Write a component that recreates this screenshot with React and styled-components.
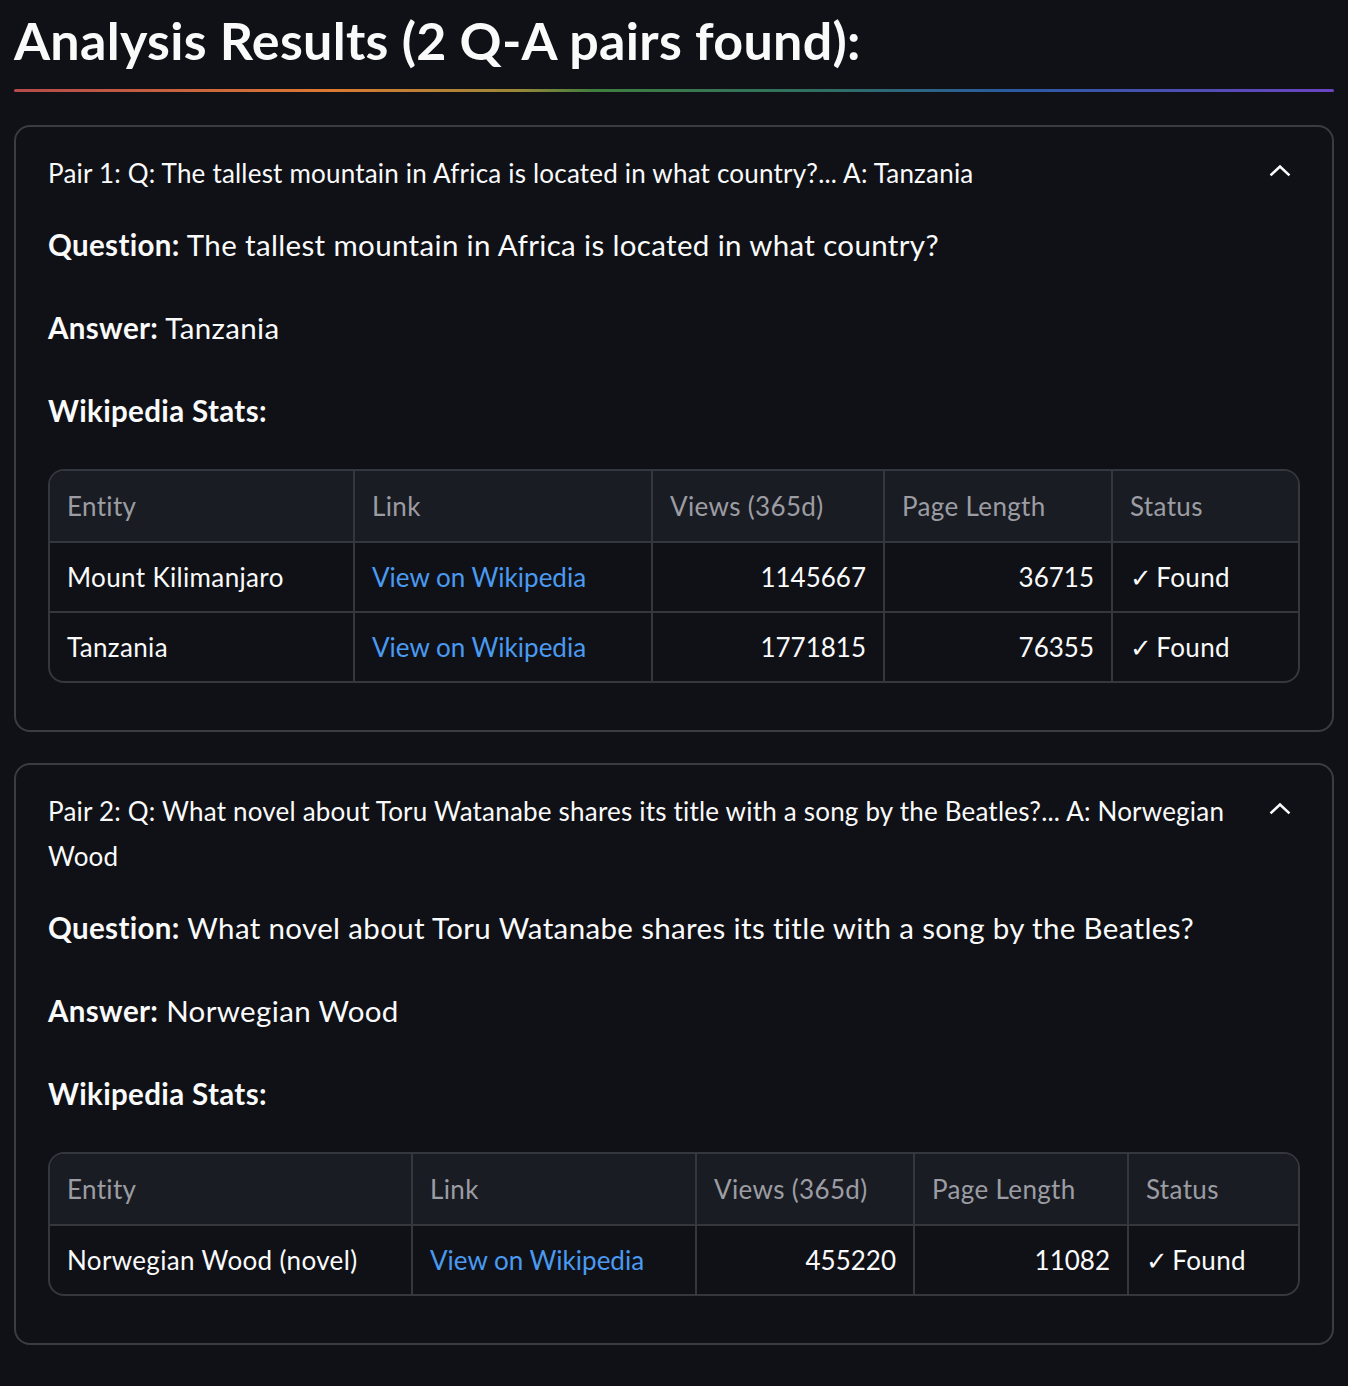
import React from "react";
import styled, { createGlobalStyle } from "styled-components";

const Global = createGlobalStyle`
  html, body { margin: 0; padding: 0; background: #0f1117; }
  body { font-family: "Lato", "Noto Sans", sans-serif; color: #fafafa; }
  * { box-sizing: border-box; }
`;

const Page = styled.div`
  padding: 8px 14px 40px 14px;
  width: 1348px;
`;

const Title = styled.h3`
  margin: 0;
  font-size: 52px;
  line-height: 64px;
  font-weight: 700;
  letter-spacing: 0.3px;
  color: #fafafa;
`;

const Divider = styled.div`
  margin-top: 17px;
  height: 3px;
  border-radius: 2px;
  background: linear-gradient(
    to right,
    #b54a4b 0%,
    #dc7a32 24%,
    #9c8838 38%,
    #3f7f3f 44%,
    #2f6f66 62%,
    #2b5aa3 76%,
    #6c44c2 100%
  );
`;

const Stack = styled.div`
  margin-top: 33px;
  display: flex;
  flex-direction: column;
  gap: 31px;
`;

const Expander = styled.div`
  border: 2px solid #3a3c42;
  border-radius: 16px;
  padding: 0 32px 47px 32px;
`;

const Summary = styled.div`
  display: flex;
  align-items: flex-start;
  justify-content: space-between;
  gap: 36px;
  padding-top: 24px;
  font-size: 26px;
  letter-spacing: 0.2px;
  line-height: 45px;
  color: #fafafa;
`;

const Chevron = styled.svg`
  flex: none;
  width: 24px;
  height: 24px;
  margin-top: 8px;
  margin-right: 8px;
`;

const Body = styled.div`
  padding-top: 26px;
`;

const Para = styled.p`
  margin: 0 0 ${(p) => (p.$last ? "0" : "38px")} 0;
  font-size: 29.5px;
  letter-spacing: 0.35px;
  line-height: 45px;
  color: #fafafa;
  b { font-weight: 700; }
`;

const Table = styled.div`
  margin-top: 36px;
  border: 2px solid #35373e;
  border-radius: 16px;
  overflow: hidden;
  display: grid;
  grid-template-columns: ${(p) => p.$cols};
`;

const Cell = styled.div`
  display: flex;
  align-items: center;
  justify-content: ${(p) => (p.$right ? "flex-end" : "flex-start")};
  height: ${(p) => (p.$head ? "72px" : p.$bottom ? "68px" : "70px")};
  padding: 0 17px;
  font-size: 26px;
  letter-spacing: ${(p) => (p.$right ? "0" : "0.35px")};
  color: ${(p) => (p.$head ? "#9c9da3" : "#fafafa")};
  background: ${(p) => (p.$head ? "#1a1c23" : "transparent")};
  border-right: ${(p) => (p.$last ? "none" : "2px solid #35373e")};
  border-bottom: ${(p) => (p.$bottom ? "none" : "2px solid #35373e")};
  white-space: nowrap;
`;

const Link = styled.a`
  color: #4a9af0;
  text-decoration: none;
  letter-spacing: 0;
`;

const Check = styled.span`
  margin-right: 4px;
`;

const heads = ["Entity", "Link", "Views (365d)", "Page Length", "Status"];

function StatsTable({ cols, rows }) {
  return (
    <Table $cols={cols}>
      {heads.map((h, i) => (
        <Cell key={h} $head $last={i === 4}>
          {h}
        </Cell>
      ))}
      {rows.map((r, ri) => {
        const bottom = ri === rows.length - 1;
        return (
          <React.Fragment key={r.entity}>
            <Cell $bottom={bottom}>{r.entity}</Cell>
            <Cell $bottom={bottom}>
              <Link href="#">View on Wikipedia</Link>
            </Cell>
            <Cell $bottom={bottom} $right>
              {r.views}
            </Cell>
            <Cell $bottom={bottom} $right>
              {r.len}
            </Cell>
            <Cell $bottom={bottom} $last>
              <Check>✓</Check>Found
            </Cell>
          </React.Fragment>
        );
      })}
    </Table>
  );
}

function Pair({ summary, question, answer, cols, rows }) {
  return (
    <Expander>
      <Summary>
        <span>{summary}</span>
        <Chevron viewBox="0 0 24 24">
          <path
            d="M3.5 15.5 L12 7.5 L20.5 15.5"
            fill="none"
            stroke="#fafafa"
            strokeWidth="2.6"
            strokeLinecap="square"
          />
        </Chevron>
      </Summary>
      <Body>
        <Para>
          <b>Question:</b> {question}
        </Para>
        <Para>
          <b>Answer:</b> {answer}
        </Para>
        <Para $last>
          <b>Wikipedia Stats:</b>
        </Para>
        <StatsTable cols={cols} rows={rows} />
      </Body>
    </Expander>
  );
}

export default function App() {
  return (
    <>
      <Global />
      <Page>
        <Title>Analysis Results (2 Q-A pairs found):</Title>
        <Divider />
        <Stack>
          <Pair
            summary="Pair 1: Q: The tallest mountain in Africa is located in what country?... A: Tanzania"
            question="The tallest mountain in Africa is located in what country?"
            answer="Tanzania"
            cols="305px 298px 232px 228px 1fr"
            rows={[
              { entity: "Mount Kilimanjaro", views: "1145667", len: "36715" },
              { entity: "Tanzania", views: "1771815", len: "76355" },
            ]}
          />
          <Pair
            summary="Pair 2: Q: What novel about Toru Watanabe shares its title with a song by the Beatles?... A: Norwegian Wood"
            question="What novel about Toru Watanabe shares its title with a song by the Beatles?"
            answer="Norwegian Wood"
            cols="363px 284px 218px 214px 1fr"
            rows={[
              { entity: "Norwegian Wood (novel)", views: "455220", len: "11082" },
            ]}
          />
        </Stack>
      </Page>
    </>
  );
}
